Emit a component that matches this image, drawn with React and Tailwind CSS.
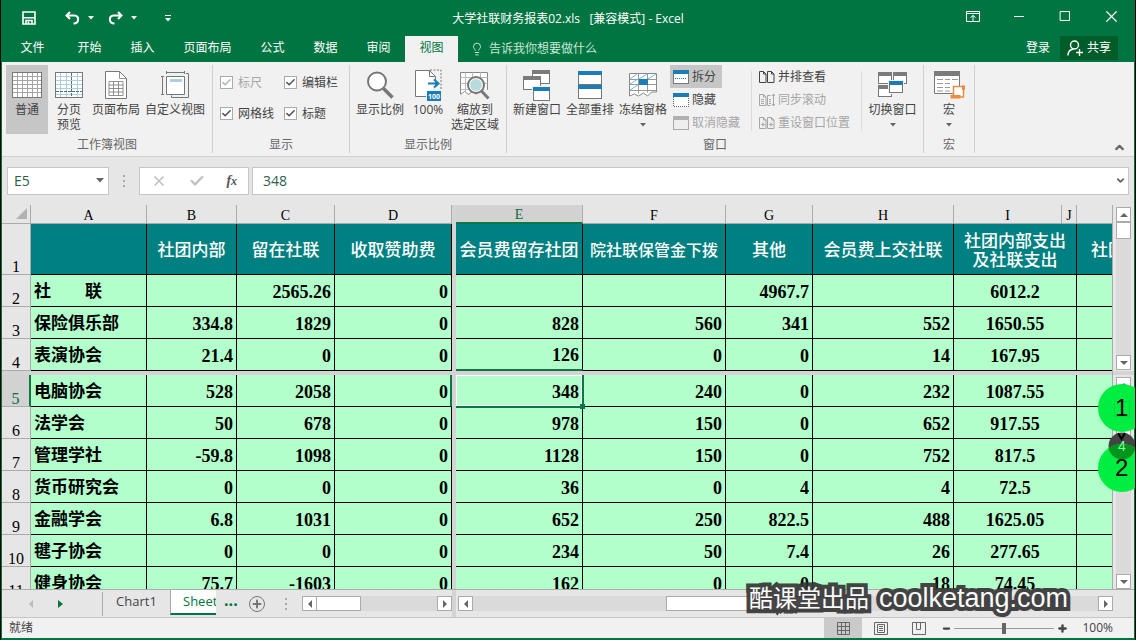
import React, { useState } from 'react';
import { Check, ChevronDown, ChevronUp, Lightbulb, Minus, Plus, Square, X } from 'lucide-react';

const TABS = ['开始', '插入', '页面布局', '公式', '数据', '审阅', '视图'];

const HEADERS = ['', '社团内部', '留在社联', '收取赞助费', '会员费留存社团', '院社联保管金下拨', '其他', '会员费上交社联'];

const ROWS = [
    { n: 2, name: '社　　联', cells: ['', '2565.26', '0', '', '', '4967.7', '', '6012.2'] },
    { n: 3, name: '保险俱乐部', cells: ['334.8', '1829', '0', '828', '560', '341', '552', '1650.55'] },
    { n: 4, name: '表演协会', cells: ['21.4', '0', '0', '126', '0', '0', '14', '167.95'] },
    { n: 5, name: '电脑协会', cells: ['528', '2058', '0', '348', '240', '0', '232', '1087.55'] },
    { n: 6, name: '法学会', cells: ['50', '678', '0', '978', '150', '0', '652', '917.55'] },
    { n: 7, name: '管理学社', cells: ['-59.8', '1098', '0', '1128', '150', '0', '752', '817.5'] },
    { n: 8, name: '货币研究会', cells: ['0', '0', '0', '36', '0', '4', '4', '72.5'] },
    { n: 9, name: '金融学会', cells: ['6.8', '1031', '0', '652', '250', '822.5', '488', '1625.05'] },
    { n: 10, name: '毽子协会', cells: ['0', '0', '0', '234', '50', '7.4', '26', '277.65'] },
    { n: 11, name: '健身协会', cells: ['75.7', '-1603', '0', '162', '0', '0', '18', '74.45'] },
];

const Caret = ({ className = 'text-[#666]' }) => (
    <svg width="6" height="4" viewBox="0 0 6 4" className={className}><path d="M0 0h6L3 3.5z" fill="currentColor" /></svg>
);

/* ---------- Title bar icons ---------- */
const SaveIcon = () => (
    <svg width="14" height="14" viewBox="0 0 14 14" fill="none" stroke="currentColor" strokeWidth="1.6">
        <path d="M1 1h12v12H1zM1 6.800h12M4 13V9.500h6V13M6.500 10.500V13" />
    </svg>
);
const UndoIcon = ({ flip }) => (
    <svg width="15" height="14" viewBox="0 0 15 14" fill="none" stroke="currentColor" strokeWidth="2" className={flip ? '-scale-x-100' : ''}>
        <path d="M5 1L1.5 4.5L5 8M2 4.5h7.5c5 0 5 8-1 8" />
    </svg>
);

/* ---------- Ribbon icons ---------- */
const GridIcon = () => (
    <svg width="30" height="26" viewBox="0 0 30 26" shapeRendering="crispEdges">
        <path d="M.5 .5h29v25H.5z" fill="#fff" stroke="#777" />
        <path d="M1 4.5h28M1 8.5h28M1 12.5h28M1 16.5h28M1 20.5h28M5.5 1v24M10.5 1v24M15.5 1v24M20.5 1v24M25.5 1v24" stroke="#a5a5a5" />
    </svg>
);
const PageBreakIcon = () => (
    <svg width="28" height="26" viewBox="0 0 28 26" shapeRendering="crispEdges">
        <path d="M.5 .5h27v25H.5z" fill="#fff" stroke="#777" />
        <path d="M1 4.5h26M1 8.5h26M1 12.5h26M1 16.5h26M1 22.5h26M5.5 1v24M11.5 1v24M22.5 1v24" stroke="#a9cfe4" />
        <path d="M16.5 1v24M1 19.5h26" stroke="#5b6f7c" strokeDasharray="3 1" />
    </svg>
);
const PageIcon = () => (
    <svg width="22" height="28" viewBox="0 0 22 28" fill="none" stroke="#777">
        <path d="M.5 .5h14l7 7v20H.5z" fill="#fff" />
        <path d="M14.5 .5v7h7M4 10.5h14v14H4zM4 14h14M4 17.5h14M4 21h14M8.500 10.500v14M13.500 10.500v14" strokeWidth=".8" />
    </svg>
);
const CustomViewIcon = () => (
    <svg width="28" height="28" viewBox="0 0 28 28" fill="none" stroke="#777">
        <path d="M5.5 5.5h18v18h-18z" fill="#fff" />
        <path d="M5.5 1.5h18M5.5 0v3M23.5 0v3M1.5 5.5v18M0 5.5h3M0 23.5h3M25 2.500h2.500v24h-17v-2" />
        <path d="M9 8h12v3H9z" fill="#a9cfe4" stroke="none" />
    </svg>
);
const ZoomIcon = () => (
    <svg width="28" height="28" viewBox="0 0 28 28" fill="none" stroke="#777">
        <circle cx="11" cy="10.500" r="9" strokeWidth="2" fill="#fff" />
        <path d="M17.500 17.500l9 9" strokeWidth="3.500" />
    </svg>
);
const HundredIcon = () => (
    <svg width="28" height="32" viewBox="0 0 28 32" fill="none">
        <path d="M12 27.500H1.500V1.500h14l6 6v9" fill="#fff" stroke="#777" />
        <path d="M15.500 1.500v6h6" stroke="#777" />
        <path d="M16 1h11v19" stroke="#777" strokeDasharray="2 1.500" />
        <path d="M14 14.500h10M20 10.500l4.500 4l-4.500 4" stroke="#1b7db8" strokeWidth="2" />
        <path d="M13 22h14v10H13z" fill="#1b7db8" />
        <text x="20" y="30" fontSize="7" fontWeight="bold" textAnchor="middle" fill="#fff" fontFamily="Open Sans">100</text>
    </svg>
);
const ZoomSelIcon = () => (
    <svg width="30" height="30" viewBox="0 0 30 30" fill="none" stroke="#888">
        <path d="M.5 24V2.500h27V20M.5 24.500l4-3 4 3 4-3 4 3" fill="#fff" />
        <path d="M.5 7.500h27M.5 13.500h27M.5 19.500h24M5.500 2.500v20M12.500 2.500v20M20.500 2.500v20" stroke="#bbb" />
        <circle cx="16" cy="15" r="8" fill="#fff" strokeWidth="2" stroke="#777" />
        <circle cx="16" cy="15" r="6" fill="#b8dcdd" stroke="none" />
        <path d="M21.500 21l7 7.500" stroke="#777" strokeWidth="3" />
    </svg>
);
const Win = ({ x, y, w, h, color = '#7b7b7b' }) => (
    <g>
        <path d={`M${x + 0.5} ${y + 0.5}h${w - 1}v${h - 1}h${1 - w}z`} fill="#fff" stroke="#777" />
        <path d={`M${x} ${y}h${w}v4h${-w}z`} fill={color} />
    </g>
);
const NewWindowIcon = () => (
    <svg width="28" height="32" viewBox="0 0 28 32" shapeRendering="crispEdges">
        <Win x={9} y={1} w={18} h={14} />
        <Win x={0} y={7} w={18} h={14} />
        <path d="M9 17h19v15H9z" fill="#f1f1f1" />
        <Win x={10} y={18} w={17} h={14} color="#1b7db8" />
    </svg>
);
const ArrangeIcon = () => (
    <svg width="24" height="30" viewBox="0 0 24 30" shapeRendering="crispEdges">
        <Win x={0} y={1} w={24} h={14} color="#1b7db8" />
        <Win x={0} y={15} w={24} h={14} color="#1b7db8" />
    </svg>
);
const FreezeIcon = () => (
    <svg width="28" height="28" viewBox="0 0 28 28" fill="none" stroke="#888">
        <path d="M.5 25V2.500h27V21M.5 25l5-2 4 2 5-3 4 3 4-4h5" fill="#fff" />
        <path d="M.5 8.500h27M.5 13.500h27M.5 19.500h27M9.500 2.500v20M18.500 2.500v19" stroke="#999" />
        <path d="M1 8l7-5M1 13l8-5M1 19l8-5M10 8l8-5M19 8l8-5" stroke="#7fb6d6" />
        <path d="M10 8h9v6h-9z" fill="#1b7db8" stroke="none" />
    </svg>
);
const SwitchIcon = () => (
    <svg width="30" height="28" viewBox="0 0 30 28" shapeRendering="crispEdges">
        <Win x={0} y={1} w={14} h={12} />
        <Win x={15} y={1} w={14} h={12} />
        <Win x={0} y={14} w={14} h={12} />
        <path d="M10 9h16v14H10z" fill="#f1f1f1" />
        <Win x={11} y={10} w={14} h={12} color="#1b7db8" />
    </svg>
);
const MacroIcon = () => (
    <svg width="31" height="28" viewBox="0 0 31 28">
        <path d="M.5 .5h25v22H.5z" fill="#fff" stroke="#777" />
        <path d="M0 0h26v5H0z" fill="#7b7b7b" />
        <path d="M3 8.500h6M11 8.500h5M18 8.500h6M3 12.500h6M11 12.500h5M3 16.500h6M11 16.500h5M3 20h6M11 20h5" stroke="#999" />
        <path d="M19.500 24V15.500h10v10.500h-10" fill="#fff" stroke="#f08a3c" strokeWidth="1.500" />
        <path d="M16.500 24h10v3.500h-10zM28 14.500h3V19h-3z" fill="#f08a3c" />
    </svg>
);
const SmallWin = ({ type }) => (
    <svg width="16" height="14" viewBox="0 0 16 14" shapeRendering="crispEdges" fill="none">
        {type === 'hidden' ? (
            <path d="M.5 4v9.500h15V4" fill="#fff" stroke="#666" strokeDasharray="1 1" />
        ) : (
            <path d="M.5 .5h15v13H.5z" fill={type === 'unhide' ? '#eee' : '#fff'} stroke={type === 'unhide' ? '#aaa' : '#777'} />
        )}
        <path d="M0 0h16v4H0z" fill={type === 'unhide' ? '#b0b0b0' : '#1b7db8'} />
        {type === 'split' && <path d="M2 8.500h12" stroke="#1b7db8" strokeDasharray="1 1" />}
    </svg>
);
const PagesIcon = ({ type }) => (
    <svg width="16" height="14" viewBox="0 0 16 14" fill="none" stroke="currentColor">
        <path d="M.5 1.500h4l2.500 2.500v8.500H.5zM4.500 1.500V4H7" />
        {type === 'sync' ? (
            <path d="M8.500 12.500V2.500h3M8.500 12.500h3M14.500 1v12M13 3l1.500-2L16 3M13 11l1.500 2l1.500-2M2 6.500h3M2 8.500h3M2 10.500h3M10 6.500h2M10 8.500h2M10 10.500h2" />
        ) : (
            <path d="M8.500 1.500h4l2.500 2.500v8.500H8.500zM12.500 1.500V4H15" />
        )}
        {type === 'reset' && <path d="M2 8.500h4M4 6.500v4M10 8.500h4M12 6.500v4" />}
    </svg>
);

/* ---------- Ribbon building blocks ---------- */
const BigButton = ({ icon, label, width, active, caret }) => (
    <button className={`flex h-[69px] flex-col items-center pt-1 ${width} ${active ? 'bg-[#c6c6c6]' : ''}`}>
        <span className="flex h-8 items-center">{icon}</span>
        <span className="mt-px whitespace-pre text-center leading-[15px]">{label}</span>
        {caret && <span className="flex h-[15px] items-center"><Caret /></span>}
    </button>
);

const SmallButton = ({ icon, label, active, disabled }) => (
    <button disabled={disabled} className={`flex h-[23px] items-center gap-[3px] pr-1.5 pl-[3px] ${active ? 'bg-[#c6c6c6]' : ''} ${disabled ? 'text-[#a6a6a6]' : ''}`}>
        {icon}
        {label}
    </button>
);

const Group = ({ label, children }) => (
    <section className="my-[3px] flex flex-col border-r border-[#d0d0d0]">
        <div className="flex h-[73px]">{children}</div>
        <h2 className="text-center leading-4 text-[#666]">{label}</h2>
    </section>
);

const CheckBox = ({ id, label, disabled }) => {
    const [on, setOn] = useState(true);
    return (
        <div className={`flex items-center gap-[5px] ${disabled ? 'text-[#a6a6a6]' : ''}`}>
            <span className="relative size-[13px]">
                <input id={id} type="checkbox" checked={on} disabled={disabled} onChange={() => setOn(!on)} className="block size-[13px] appearance-none border border-[#ababab] bg-white" />
                {on && <Check size={11} strokeWidth={3.5} className={`pointer-events-none absolute top-px left-px ${disabled ? 'text-[#b5b5b5]' : 'text-[#555]'}`} />}
            </span>
            <label htmlFor={id}>{label}</label>
        </div>
    );
};

/* ---------- Scroll bars ---------- */
const ScrollButton = ({ dir }) => {
    const paths = { up: 'M0 6h8L4 2z', down: 'M0 2h8L4 6z', left: 'M6 0v8L2 4z', right: 'M2 0v8l4-4z' };
    return (
        <button aria-label={dir} className="flex size-[15px] shrink-0 items-center justify-center border border-[#ababab] bg-white">
            <svg width="8" height="8"><path d={paths[dir]} fill="#666" /></svg>
        </button>
    );
};

/* ---------- Sheet ---------- */
const ColHead = ({ children, active }) => (
    <th className={`h-[19px] border-r p-0 align-bottom font-normal leading-[14px] ${active ? 'border-b-2 border-[#ababab] border-b-[#0e7545] bg-[#d2d2d2] text-[#0e6b40]' : 'border-b border-[#ababab]'}`}>
        {children}
    </th>
);

const SplitCell = () => <td className="bg-[#d4d4d4] p-0" />;

const SheetRow = ({ row }) => {
    const active = row.n === 5;
    return (
        <tr className="h-8">
            <th className={`p-0 text-center align-bottom text-base font-normal leading-[14px] ${active ? 'border-r-2 border-b border-[#0e7545] border-b-[#ababab] bg-[#d2d2d2] text-[#0e6b40]' : 'border-r border-b border-[#ababab]'}`}>{row.n}</th>
            <td className="border-r border-b border-black bg-[#b3ffcc] pt-[3px] pb-0 pl-[3px] text-[17px] font-bold leading-5">{row.name}</td>
            {row.cells.map((value, i) => {
                const selected = active && i === 3;
                const border = active && i === 2 ? 'border-r-2 border-b border-r-[#0e7545] border-b-black pr-0.5 pl-[3px]'
                    : row.n === 4 && i === 3 ? 'border-r border-b-2 border-r-black border-b-[#0e7545] px-[3px]'
                    : 'border-r border-b border-black px-[3px]';
                return (
                    <React.Fragment key={i}>
                        {i === 3 && <SplitCell />}
                        <td colSpan={i === 7 ? 2 : 1} className={`bg-[#b3ffcc] pt-0.5 pb-0 text-lg font-bold leading-5 ${border} ${i === 7 ? 'text-center' : 'text-right'} ${selected ? 'relative z-10' : ''}`}>
                            {value}
                            {selected && (
                                <span className="absolute -right-0.5 -bottom-0.5 top-0 left-0 border-r-2 border-b-2 border-[#0e7545]">
                                    <span className="block size-full border border-white" />
                                    <span className="absolute -right-[3px] -bottom-[3px] size-[5px] bg-[#0e7545]" />
                                </span>
                            )}
                        </td>
                    </React.Fragment>
                );
            })}
            <td className="border-b border-black bg-[#b3ffcc]" />
        </tr>
    );
};

const Sheet = () => (
    <table className="w-full table-fixed border-separate border-spacing-0 font-['Liberation_Serif','Noto_Sans_CJK_SC',serif] text-black">
        <colgroup>
            <col className="w-[29px]" /><col className="w-[116px]" /><col className="w-[90px]" /><col className="w-[98px]" />
            <col className="w-[117px]" /><col className="w-[4px]" /><col className="w-[127px]" /><col className="w-[143px]" />
            <col className="w-[87px]" /><col className="w-[141px]" /><col className="w-[108px]" /><col className="w-[15px]" /><col />
        </colgroup>
        <thead>
            <tr className="text-sm">
                <ColHead>
                    <svg width="11" height="11" className="mb-1 ml-auto mr-[3px]"><path d="M11 0v11H0z" fill="#b2b2b2" /></svg>
                </ColHead>
                <ColHead>A</ColHead><ColHead>B</ColHead><ColHead>C</ColHead><ColHead>D</ColHead>
                <SplitCell />
                <ColHead active>E</ColHead><ColHead>F</ColHead><ColHead>G</ColHead><ColHead>H</ColHead><ColHead>I</ColHead><ColHead>J</ColHead>
                <th className="border-b border-[#ababab]" />
            </tr>
        </thead>
        <tbody>
            <tr className="h-[51px] text-[17px] leading-[19px] text-white">
                <th className="border-r border-b border-[#ababab] p-0 align-bottom text-base font-normal leading-[14px] text-black">1</th>
                {HEADERS.map((h, i) => (
                    <React.Fragment key={i}>
                        {i === 4 && <SplitCell />}
                        <th className={`whitespace-nowrap border-r border-b border-black bg-[#008080] px-0 pt-[3px] pb-0 font-medium ${i === 5 ? 'text-base' : ''}`}>{h}</th>
                    </React.Fragment>
                ))}
                <th colSpan={2} className="border-r border-b border-black bg-[#008080] px-0 pt-[3px] pb-0 font-medium">社团内部支出<br />及社联支出</th>
                <th className="overflow-hidden whitespace-nowrap border-b border-black bg-[#008080] pt-[3px] pr-0 pb-0 pl-3.5 text-left font-medium">社团</th>
            </tr>
            {ROWS.slice(0, 3).map((row) => <SheetRow key={row.n} row={row} />)}
            <tr className="h-1"><td colSpan={13} className="bg-[#d4d4d4] p-0" /></tr>
            {ROWS.slice(3).map((row) => <SheetRow key={row.n} row={row} />)}
        </tbody>
    </table>
);

/* Click counters drawn over the lower scroll bar */
const ClickMarks = () => (
    <div className="pointer-events-none absolute top-[179px] -right-px z-20 h-[110px] w-[37px] overflow-hidden font-['Liberation_Sans',sans-serif] text-2xl text-black">
        <svg width="48" height="110" viewBox="0 0 48 110" className="block">
            <defs><clipPath id="overlap"><circle cx="24" cy="84" r="24" /></clipPath></defs>
            <circle cx="24" cy="62" r="13.500" fill="#444" />
            <circle cx="24" cy="24" r="24" fill="#00ee41" />
            <path d="M16.500 17.500h15v15h-15z" fill="none" stroke="#00d93b" />
            <circle cx="24" cy="84" r="24" fill="#00ee41" />
            <circle cx="24" cy="62" r="13.500" fill="#00961c" clipPath="url(#overlap)" />
            <path d="M20 49l3.500 6 3.500-6" fill="none" stroke="#000" strokeWidth="2" />
        </svg>
        <span className="absolute top-2 left-[17px] leading-8">1</span>
        <span className="absolute top-[54px] left-5 text-sm leading-4 text-[#7dff9d]">4</span>
        <span className="absolute top-[68px] left-[17px] leading-8">2</span>
    </div>
);

const App = () => {
    const [zoom, setZoom] = useState(50);
    const [formula, setFormula] = useState('348');

    return (
        <div className="h-screen overflow-hidden bg-black px-px font-['Open_Sans','Noto_Sans_CJK_SC',sans-serif] text-xs text-[#444]">
            <div className="relative flex h-full flex-col border-x border-b-2 border-[#007541] bg-[#e6e6e6]">
                {/* Title bar */}
                <header className="relative flex h-9 shrink-0 items-center justify-between bg-[#007541] text-white">
                    <div className="flex items-center pl-5">
                        <button aria-label="保存"><SaveIcon /></button>
                        <button aria-label="撤消" className="ml-[29px] flex items-center gap-2"><UndoIcon /><Caret className="text-white" /></button>
                        <button aria-label="恢复" className="ml-3.5 flex items-center gap-2"><UndoIcon flip /><Caret className="text-white" /></button>
                        <button aria-label="自定义" className="ml-7 flex flex-col items-center gap-0.5"><span className="h-px w-1.5 bg-white" /><Caret className="text-white" /></button>
                    </div>
                    <h1 className="absolute left-1/2 -translate-x-1/2 whitespace-pre pt-0.5">大学社联财务报表02.xls   [兼容模式] - Excel</h1>
                    <div className="flex h-8 self-start">
                        <button aria-label="功能区选项" className="flex w-[46px] items-center justify-center">
                            <svg width="14" height="11" viewBox="0 0 14 11" fill="none" stroke="currentColor"><path d="M.5 .5h13v10H.5zM.5 2.500h13M7 10V4.500M4.500 6.500L7 4.500l2.500 2" /></svg>
                        </button>
                        <button aria-label="最小化" className="flex w-[46px] items-center justify-center"><span className="h-px w-2.5 bg-white" /></button>
                        <button aria-label="最大化" className="flex w-[46px] items-center justify-center"><Square size={12} strokeWidth={2} className="[&_rect]:[rx:0]" /></button>
                        <button aria-label="关闭" className="flex w-[46px] items-center justify-center"><X size={19} strokeWidth={1.5} /></button>
                    </div>
                </header>

                {/* Ribbon tabs */}
                <nav className="flex h-[26px] shrink-0 items-stretch bg-[#007541] text-white">
                    <button className="w-[61px] pb-0.5">文件</button>
                    {TABS.map((tab) => (
                        <button key={tab} className={`pb-0.5 ${tab === '页面布局' ? 'w-[77px]' : 'w-[53px]'} ${tab === '视图' ? 'bg-[#f1f1f1] text-[#007541]' : ''}`}>{tab}</button>
                    ))}
                    <button className="ml-3 flex items-center gap-[5px] text-[#c9e6d8]"><Lightbulb size={14} strokeWidth={1.7} />告诉我你想要做什么</button>
                    <button className="mr-[10px] ml-auto pb-0.5">登录</button>
                    <button className="mr-4 flex h-6 w-[58px] items-center justify-center gap-1 bg-[#005c28]">
                        <svg width="16" height="16" viewBox="0 0 16 16" fill="none" stroke="currentColor" strokeWidth="1.4"><circle cx="7.500" cy="5" r="4" /><path d="M1 15.500c0-4 2.500-6 5.500-6.500M9 12.500h7M12.500 9v7" /></svg>
                        共享
                    </button>
                </nav>

                {/* Ribbon */}
                <div className="flex h-[95px] shrink-0 border-b border-[#d0d0d0] bg-[#f1f1f1]">
                    <Group label="工作簿视图">
                        <div className="flex pr-1 pl-1">
                            <BigButton icon={<GridIcon />} label="普通" width="w-[42px]" active />
                            <BigButton icon={<PageBreakIcon />} label={'分页\n预览'} width="w-[42px]" />
                            <BigButton icon={<PageIcon />} label="页面布局" width="w-[52px]" />
                            <BigButton icon={<CustomViewIcon />} label="自定义视图" width="w-[66px]" />
                        </div>
                    </Group>
                    <Group label="显示">
                        <div className="grid h-16 grid-cols-[64px_62px] items-center pr-[3px] pl-[7px] pt-0.5">
                            <CheckBox id="ruler" label="标尺" disabled />
                            <CheckBox id="formulabar" label="编辑栏" />
                            <CheckBox id="gridlines" label="网格线" />
                            <CheckBox id="headings" label="标题" />
                        </div>
                    </Group>
                    <Group label="显示比例">
                        <div className="flex pr-1.5 pl-1">
                            <BigButton icon={<ZoomIcon />} label="显示比例" width="w-[52px]" />
                            <BigButton icon={<HundredIcon />} label="100%" width="w-[44px]" />
                            <BigButton icon={<ZoomSelIcon />} label={'缩放到\n选定区域'} width="w-[50px]" />
                        </div>
                    </Group>
                    <Group label="窗口">
                        <div className="flex pl-[3px]">
                            <BigButton icon={<NewWindowIcon />} label="新建窗口" width="w-[54px]" />
                            <BigButton icon={<ArrangeIcon />} label="全部重排" width="w-[52px]" />
                            <BigButton icon={<FreezeIcon />} label="冻结窗格" width="w-[54px]" caret />
                        </div>
                        <div className="flex w-[81px] flex-col items-start">
                            <SmallButton icon={<SmallWin type="split" />} label="拆分" active />
                            <SmallButton icon={<SmallWin type="hidden" />} label="隐藏" />
                            <SmallButton icon={<SmallWin type="unhide" />} label="取消隐藏" disabled />
                        </div>
                        <div className="my-1.5 w-px bg-[#dcdcdc]" />
                        <div className="flex w-[109px] flex-col items-start pl-1">
                            <SmallButton icon={<PagesIcon />} label="并排查看" />
                            <SmallButton icon={<PagesIcon type="sync" />} label="同步滚动" disabled />
                            <SmallButton icon={<PagesIcon type="reset" />} label="重设窗口位置" disabled />
                        </div>
                        <div className="my-1.5 w-px bg-[#dcdcdc]" />
                        <BigButton icon={<SwitchIcon />} label="切换窗口" width="w-[61px]" caret />
                    </Group>
                    <Group label="宏">
                        <BigButton icon={<MacroIcon />} label="宏" width="w-[50px]" caret />
                    </Group>
                    <button aria-label="折叠功能区" className="mr-2 mb-0.5 ml-auto self-end text-[#666]"><ChevronUp size={13} strokeWidth={4} /></button>
                </div>

                {/* Formula bar */}
                <div className="flex h-12 shrink-0 items-center pr-[5px] pl-[5px] text-sm">
                    <div className="relative">
                        <input aria-label="名称框" defaultValue="E5" className="block h-7 w-[102px] border border-[#c6c6c6] bg-white pb-0.5 pl-1.5 text-[#2b5f4a]" />
                        <svg width="8" height="5" className="absolute top-[11px] right-[5px]"><path d="M0 0h8L4 4.500z" fill="#666" /></svg>
                    </div>
                    <div className="flex w-[30px] flex-col items-center gap-[3px]">
                        <span className="size-0.5 bg-[#aaa]" /><span className="size-0.5 bg-[#aaa]" /><span className="size-0.5 bg-[#aaa]" />
                    </div>
                    <div className="flex h-7 w-[110px] items-center justify-around border border-[#c6c6c6] bg-white text-[#c0c0c0]">
                        <button aria-label="取消"><X size={16} strokeWidth={2.5} /></button>
                        <button aria-label="输入"><Check size={16} strokeWidth={3.5} /></button>
                        <button aria-label="插入函数" className="font-['Liberation_Serif',serif] text-sm font-bold italic leading-4 text-[#555]">f<span className="text-xs">x</span></button>
                    </div>
                    <div className="relative ml-[3px] flex-1">
                        <input aria-label="编辑栏" value={formula} onChange={(e) => setFormula(e.target.value)} className="block h-7 w-full border border-[#c6c6c6] bg-white pb-0.5 pl-2.5 text-[#2b5f4a]" />
                        <ChevronDown size={11} strokeWidth={4} className="absolute top-2 right-[3px] text-[#666]" />
                    </div>
                </div>

                {/* Grid with the split scroll bars */}
                <main className="relative flex min-h-0 flex-1">
                    <div className="min-w-0 flex-1 overflow-hidden border-r border-[#ababab]"><Sheet /></div>
                    <div className="flex w-[21px] flex-col">
                        <div className="flex h-[166px] flex-col items-center pt-0.5 pb-px">
                            <ScrollButton dir="up" />
                            <div className="w-[15px] flex-1 bg-[#dadada]"><div className="h-[17px] border border-[#ababab] bg-white" /></div>
                            <ScrollButton dir="down" />
                        </div>
                        <div className="h-1 bg-[#d4d4d4]" />
                        <div className="flex flex-1 flex-col items-center pt-0.5">
                            <ScrollButton dir="up" />
                            <div className="w-[15px] flex-1 bg-[#dadada]"><div className="h-12 border border-[#ababab] bg-white" /></div>
                            <ScrollButton dir="down" />
                        </div>
                    </div>
                    <ClickMarks />
                </main>

                {/* Sheet tabs and horizontal scroll bars */}
                <div className="relative flex h-7 shrink-0 items-center border-t border-[#ababab]">
                    <div className="flex h-full w-[450px] shrink-0 items-center">
                        <div className="flex h-6 w-[101px] items-center gap-6 border-r border-[#ababab] pl-[27px]">
                            <button aria-label="上一个"><svg width="5" height="8"><path d="M4 0v8L0 4z" fill="#bbb" /></svg></button>
                            <button aria-label="下一个"><svg width="5" height="8"><path d="M0 0v8l5-4z" fill="#007541" /></svg></button>
                        </div>
                        <button className="h-full w-[67px] pb-1 text-[13px]">Chart1</button>
                        <button className="h-[25px] w-[46px] self-start overflow-hidden border-b-2 border-l border-[#007541] border-l-[#ababab] bg-white pl-3 text-left text-[13px] text-[#007541]">Sheet1</button>
                        <button className="ml-2 pb-2 text-base font-bold leading-5 text-[#007541]">...</button>
                        <button aria-label="新工作表" className="ml-[11px] flex size-4 items-center justify-center rounded-full border border-[#777]"><Plus size={12} strokeWidth={4} className="text-[#777]" /></button>
                        <div className="ml-5 flex flex-col gap-[3px]">
                            <span className="size-0.5 bg-[#aaa]" /><span className="size-0.5 bg-[#aaa]" /><span className="size-0.5 bg-[#aaa]" />
                        </div>
                        <div className="ml-auto flex w-[150px] bg-[#dadada]">
                            <ScrollButton dir="left" />
                            <div className="w-11 border border-l-0 border-[#ababab] bg-white" />
                            <span className="flex-1" />
                            <ScrollButton dir="right" />
                        </div>
                    </div>
                    <div className="h-full w-1 bg-[#d4d4d4]" />
                    <div className="mr-[21px] ml-0.5 flex flex-1 bg-[#dadada]">
                        <ScrollButton dir="left" />
                        <div className="ml-[193px] w-40 border border-[#ababab] bg-white" />
                        <span className="flex-1" />
                        <ScrollButton dir="right" />
                    </div>
                    <div className="pointer-events-none absolute right-[66px] bottom-px flex items-baseline gap-2.5 whitespace-nowrap font-['Noto_Sans_CJK_SC',sans-serif] text-2xl leading-9 text-white opacity-90 [-webkit-text-stroke:8px_#333] [paint-order:stroke_fill] [stroke-linejoin:round]">
                        <span>酷课堂出品</span>
                        <span className="font-['Liberation_Sans',sans-serif] text-[27px]">coolketang.com</span>
                    </div>
                </div>

                {/* Status bar */}
                <footer className="flex h-[21px] shrink-0 items-center border-t border-[#c6c6c6] bg-[#f1f1f1] pr-[21px] pl-[7px]">
                    <span>就绪</span>
                    <div className="ml-auto flex h-full text-[#666]">
                        <button aria-label="普通视图" className="flex w-[38px] items-center justify-center bg-[#cacaca]">
                            <svg width="13" height="13" fill="none" stroke="currentColor"><path d="M.5 .5h12v12H.5zM.5 4.500h12M.5 8.500h12M4.500 .5v12M8.500 .5v12" /></svg>
                        </button>
                        <button aria-label="页面布局视图" className="flex w-[38px] items-center justify-center">
                            <svg width="14" height="13" fill="none" stroke="currentColor"><path d="M.5 .5h13v12H.5zM3.500 2.500h7v8h-7zM5 4.500h4M5 6.500h4M5 8.500h4" /></svg>
                        </button>
                        <button aria-label="分页预览视图" className="flex w-[38px] items-center justify-center">
                            <svg width="14" height="13" fill="none" stroke="currentColor"><path d="M.5 .5h13v12H.5zM4.500 .5v7M4.500 7.500h4M8.500 .5v7" /></svg>
                        </button>
                    </div>
                    <button aria-label="缩小" className="ml-1"><Minus size={9} strokeWidth={6} /></button>
                    <input aria-label="缩放" type="range" value={zoom} onChange={(e) => setZoom(Number(e.target.value))} className="mx-[3px] h-px w-[100px] appearance-none bg-[#999] [&::-webkit-slider-thumb]:h-[11px] [&::-webkit-slider-thumb]:w-1 [&::-webkit-slider-thumb]:appearance-none [&::-webkit-slider-thumb]:bg-[#666]" />
                    <button aria-label="放大"><Plus size={11} strokeWidth={5} /></button>
                    <span className="ml-3.5">100%</span>
                </footer>
            </div>
        </div>
    );
};

export default App;
